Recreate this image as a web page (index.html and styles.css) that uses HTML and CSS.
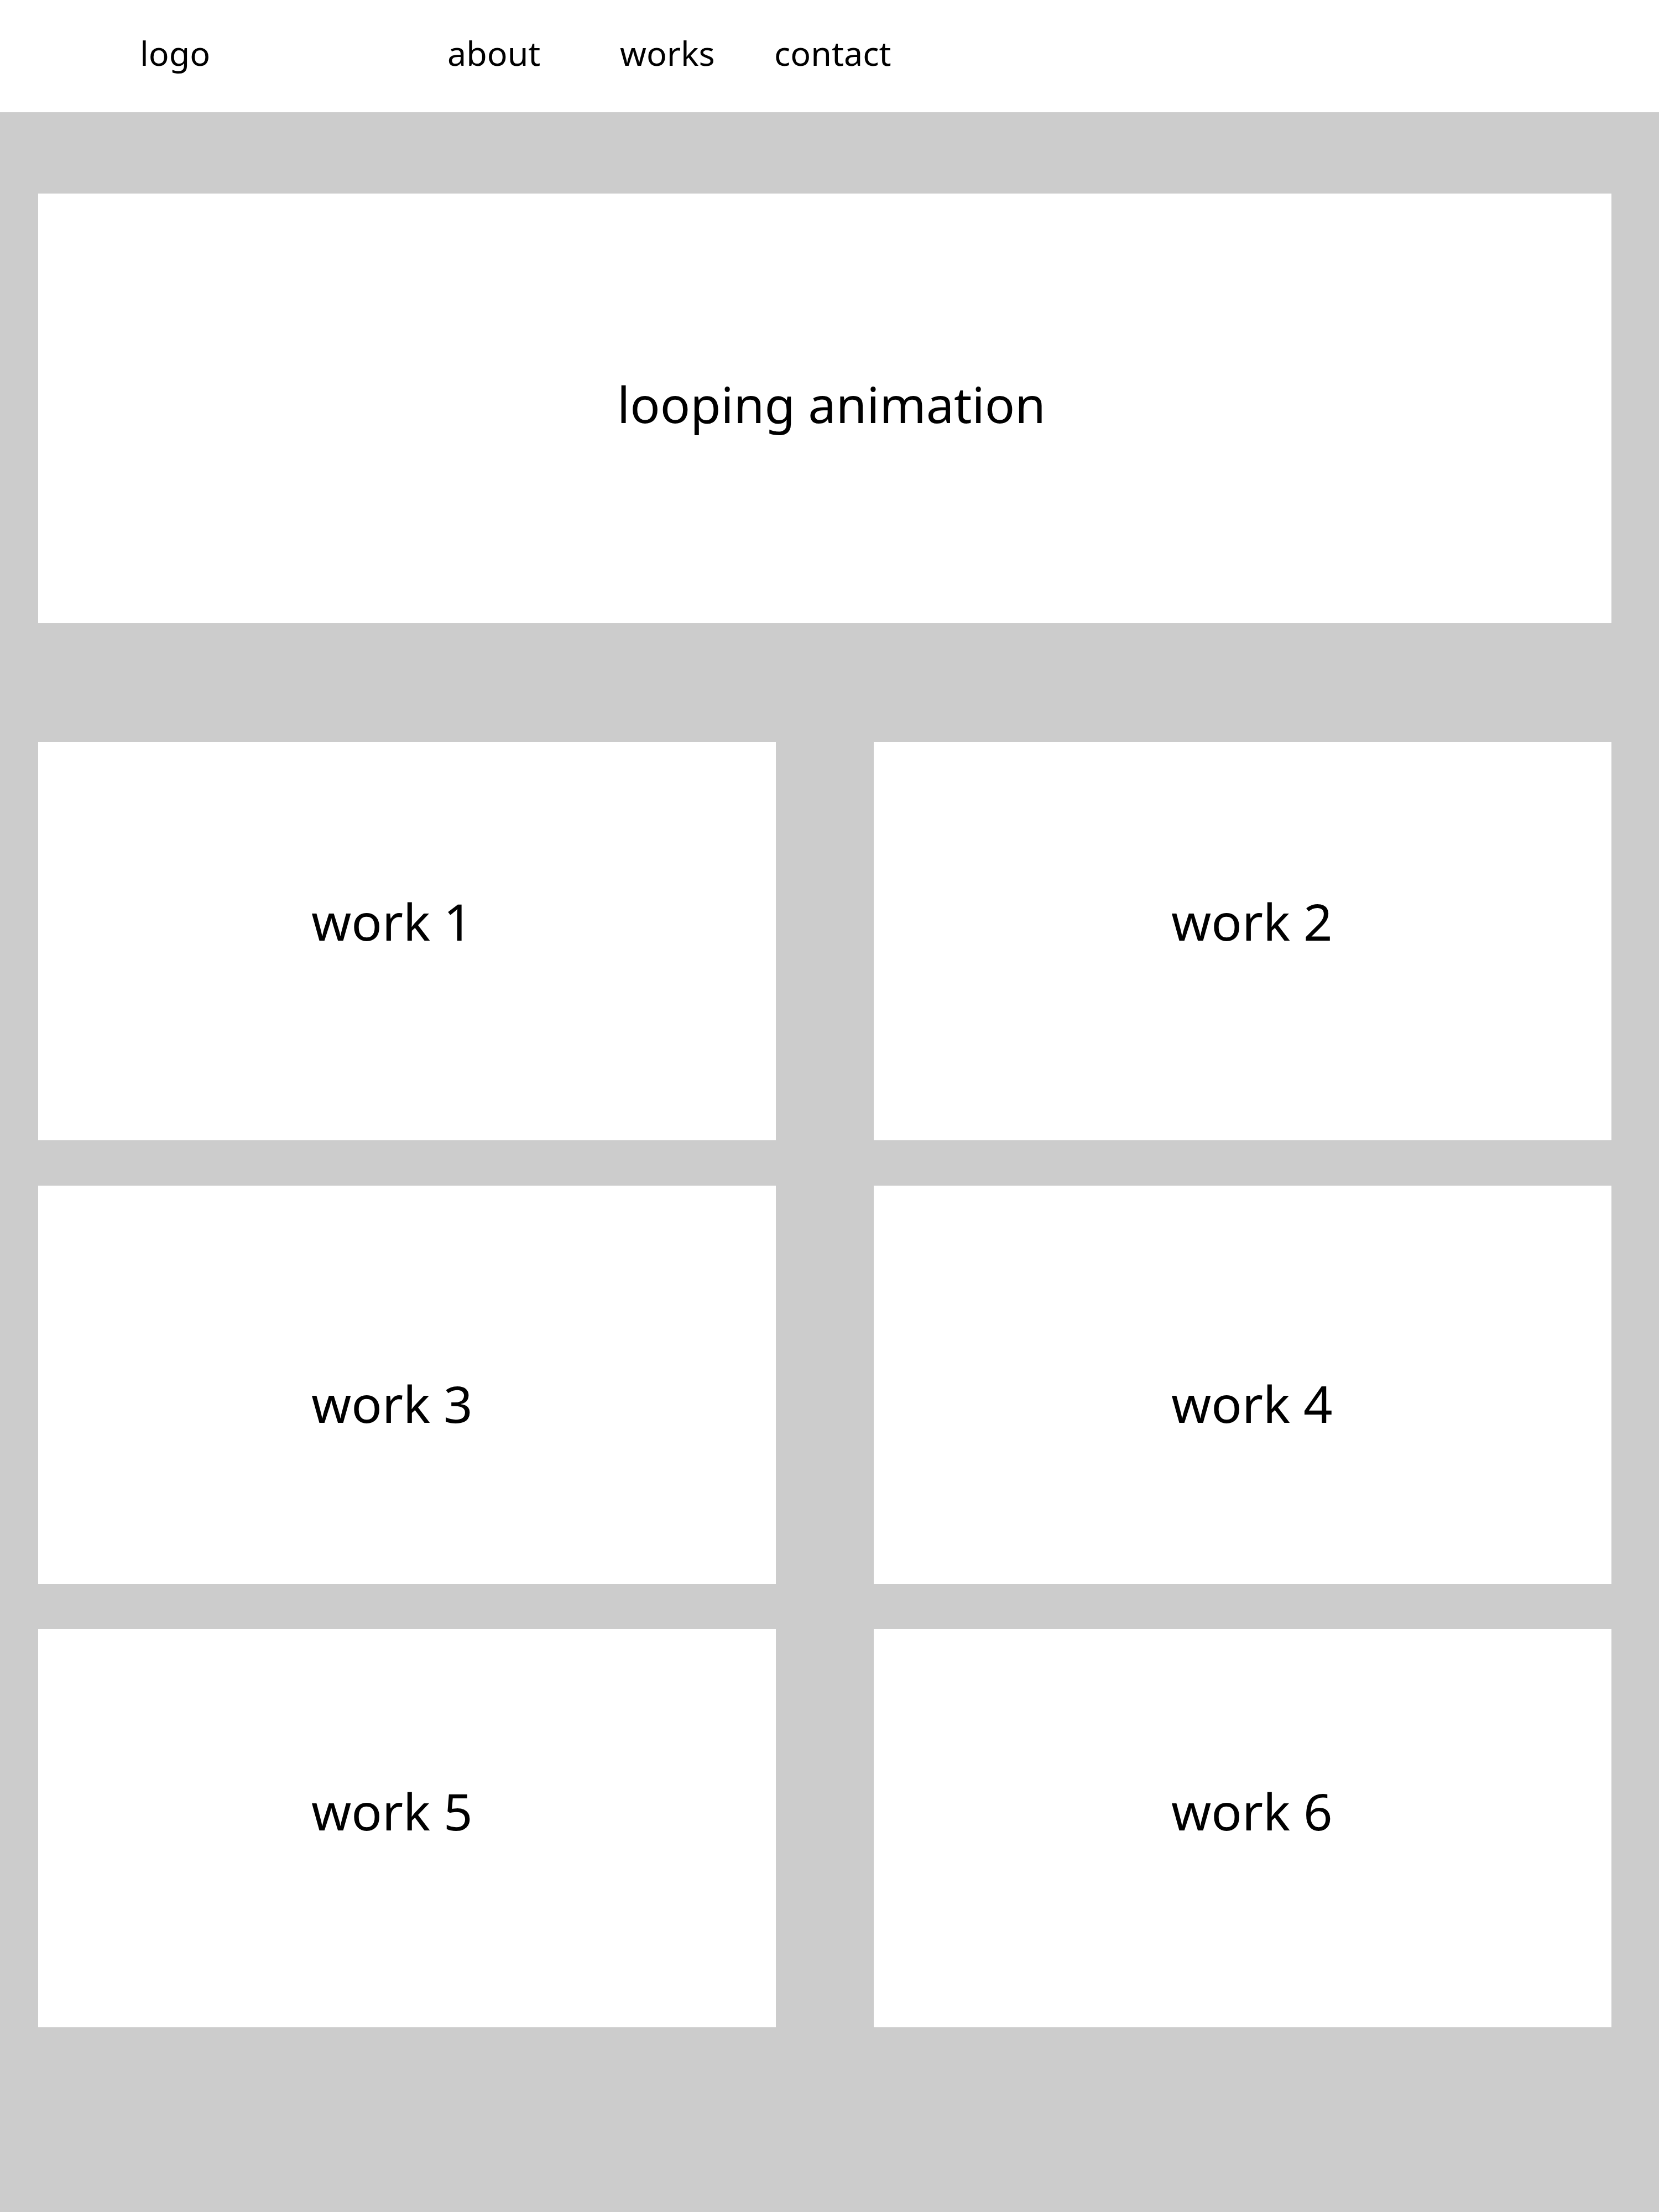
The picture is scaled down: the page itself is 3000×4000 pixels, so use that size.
FILE: index.html
```html
<!DOCTYPE html>
<html lang="en">
<head>
    <meta charset="UTF-8" />
    <meta name="viewport" content="width=device-width, initial-scale=1.0" />
    <title>Portfolio</title>
    <link rel="stylesheet" href="styles.css">
</head>
<body>
    <header class="header">
        <div class="logo">logo</div>
        <nav class="nav">
            <a href="#">about</a>
            <a href="#">works</a>
            <a href="#">contact</a>
        </nav>
    </header>

    <main class="main">
        <section class="hero">looping animation</section>

        <section class="works">
            <div class="card">work 1</div>
            <div class="card right">work 2</div>
            <div class="card low">work 3</div>
            <div class="card right low">work 4</div>
            <div class="card last">work 5</div>
            <div class="card right last">work 6</div>
        </section>
    </main>
</body>
</html>
```

FILE: styles.css
```css
body {
    margin: 0;
    background-color: #cccccc;
    font-family: "Noto Sans", "Open Sans", sans-serif;
    color: #000;
    min-height: 4000px;
}

.header {
    height: 203px;
    box-sizing: border-box;
    background-color: #fff;
    display: flex;
    padding: 65px 0 0 253px;
    font-size: 61px;
    line-height: 1;
}

.logo {
    width: 556px;
}

.nav {
    display: grid;
    grid-template-columns: 312px 279px auto;
}

.nav a {
    color: #000;
    text-decoration: none;
}

.main {
    padding: 147px 86px 0 69px;
}

.hero {
    height: 777px;
    box-sizing: border-box;
    background-color: #fff;
    padding: 335px 0 0 24px;
    text-align: center;
    font-size: 90px;
    line-height: 1;
}

.works {
    margin-top: 215px;
    display: grid;
    grid-template-columns: 1fr 1fr;
    grid-auto-rows: 720px;
    column-gap: 177px;
    row-gap: 82px;
}

.card {
    background-color: #fff;
    box-sizing: border-box;
    padding: 278px 0 0 494px;
    font-size: 92px;
    line-height: 1;
}

.card.right {
    padding-left: 538px;
}

.card.low {
    padding-top: 348px;
}

.card.last {
    padding-top: 283px;
}
```
